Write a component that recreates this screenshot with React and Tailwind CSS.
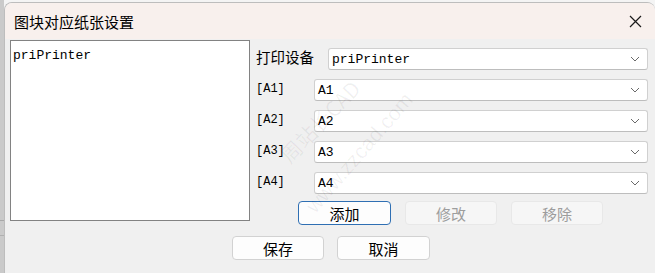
import React from 'react';

const cjk = "font-['Noto_Sans_CJK_SC','Noto_Sans',sans-serif]";
const mono = "font-['Liberation_Mono','Noto_Sans_CJK_SC',monospace]";

const Chevron = () => (
  <svg width="10" height="6" viewBox="0 0 10 6" fill="none">
    <polyline points="1,1 5,5 9,1" stroke="#6a6a6a" strokeWidth="1" />
  </svg>
);

const Combo = ({ value }) => (
  <div className="flex-1 h-[22px] flex items-center justify-between bg-white border border-[#d0d0d0] border-b-[#bdbdbd] rounded-[3px] pl-[3px] pr-[7px]">
    <span className={`${mono} text-[13px] leading-none text-black`}>{value}</span>
    <Chevron />
  </div>
);

const Btn = ({ children, disabled, primary, w = 'w-[93px]' }) => (
  <div
    className={`${w} h-[24px] flex items-center justify-center rounded-[4px] ${cjk} text-[15px] leading-none
    ${primary ? 'border border-[#2f6fb3] bg-[#fdfdfd] text-black' : disabled ? 'border border-[#e8e8e8] bg-[#f6f6f6] text-[#9d9d9d]' : 'border border-[#d2d2d2] bg-[#fdfdfd] text-black'}`}
  >
    {children}
  </div>
);

const paperRows = ['A1', 'A2', 'A3', 'A4'];

export default function App() {
  return (
    <div className="w-[655px] h-[273px] relative overflow-hidden bg-[#f4f4f4] flex">
      {/* window behind */}
      <div className="w-[4px] h-full bg-[#cacaca] flex flex-col">
        <div className="h-[220px]" />
        <div className="h-px bg-[#a8a8a8]" />
        <div className="h-[14px]" />
        <div className="h-px bg-[#b0b0b0]" />
      </div>

      <div className="flex-1 mt-[2px] flex flex-col rounded-t-[8px] border-l border-t border-[#bdbdbd] overflow-hidden bg-[#f0f0f0]">
        {/* title bar */}
        <div className="h-[36px] shrink-0 flex items-center justify-between pl-[9px] pr-[13px] bg-[#f8f0ed]">
          <span className={`${cjk} text-[15px] leading-none text-black`}>图块对应纸张设置</span>
          <svg width="13" height="13" viewBox="0 0 13 13" fill="none">
            <path d="M1 1L12 12M12 1L1 12" stroke="#1a1a1a" strokeWidth="1.2" />
          </svg>
        </div>

        {/* body */}
        <div className="flex-1 flex flex-col pl-[5px]">
          <div className="flex items-start">
            <div className="mt-[1px] w-[240px] h-[181px] bg-white border border-[#828282] pl-[2px]">
              <span className={`${mono} text-[13px] leading-[16px] text-black`}>priPrinter</span>
            </div>

            <div className="ml-[6px] w-[392px] pt-[9px] flex flex-col">
              <div className="h-[22px] flex items-center">
                <span className={`w-[72px] ${cjk} text-[14.5px] leading-none text-black -mt-[3px]`}>打印设备</span>
                <Combo value="priPrinter" />
              </div>
              {paperRows.map((p) => (
                <div key={p} className="h-[22px] mt-[9px] flex items-center">
                  <span className={`w-[58px] ${mono} text-[12px] leading-none text-black -mt-[2px]`}>[{p}]</span>
                  <Combo value={p} />
                </div>
              ))}
              <div className="mt-[7px] pl-[42px] flex gap-[14px]">
                <Btn primary>添加</Btn>
                <Btn disabled w="w-[92px]">修改</Btn>
                <Btn disabled w="w-[92px]">移除</Btn>
              </div>
            </div>
          </div>

          <div className="mt-[11px] pl-[222px] flex gap-[13px]">
            <Btn w="w-[92px]">保存</Btn>
            <Btn>取消</Btn>
          </div>
        </div>
      </div>

      {/* watermark */}
      <div className="absolute inset-0 pointer-events-none z-10">
        <div className={`absolute left-[264px] top-[111px] w-[112px] text-center -rotate-[46deg] ${cjk} text-[21px] leading-none text-black/[0.06] whitespace-nowrap`}>
          周站长CAD
        </div>
        <div className={`absolute left-[282px] top-[142px] w-[154px] text-center -rotate-[49deg] font-['Liberation_Sans',sans-serif] text-[21px] leading-none text-black/[0.06] whitespace-nowrap`}>
          www.zzcad.com
        </div>
      </div>
    </div>
  );
}
